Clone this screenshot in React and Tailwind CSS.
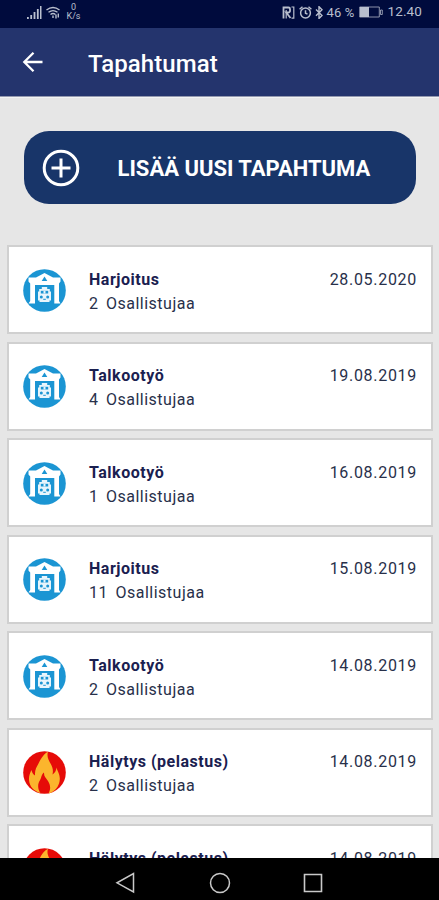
import React from 'react';

const EVENTS = [
  { id: 1, type: 'station', title: 'Harjoitus', count: 2, date: '28.05.2020' },
  { id: 2, type: 'station', title: 'Talkootyö', count: 4, date: '19.08.2019' },
  { id: 3, type: 'station', title: 'Talkootyö', count: 1, date: '16.08.2019' },
  { id: 4, type: 'station', title: 'Harjoitus', count: 11, date: '15.08.2019' },
  { id: 5, type: 'station', title: 'Talkootyö', count: 2, date: '14.08.2019' },
  { id: 6, type: 'fire', title: 'Hälytys (pelastus)', count: 2, date: '14.08.2019' },
  { id: 7, type: 'fire', title: 'Hälytys (pelastus)', count: 2, date: '14.08.2019' },
];

const StationIcon = () => (
  <svg viewBox="0 0 43 43" className="h-[43px] w-[43px] shrink-0">
    <circle cx="21.5" cy="21.5" r="21.3" fill="#1b95d3" />
    {/* Building with a gabled roof and two pillars */}
    <path d="M5.500 12.500V8.500H13l8.500-4.500L30 8.500h7.500v4l-1.500 2V32l1.500 2.500h-6.200V16H12v18.500H5.500L7.200 32V14.500z" fill="#fff" />
    <path d="M21.500 7.500l2.800 4.500h-5.600z" fill="#1b95d3" />
    {/* Vehicle in the doorway */}
    <path d="M18.800 18h5.400v2h2.600v2.500h1.200v9h-1.500V33h-10v-1.500H15v-9h1.200V20h2.600z" fill="#e8f5fc" />
    <path d="M17.800 21.800h7.400v2.700h-7.400z" fill="#1b95d3" />
    <path d="M20.500 21.800h2v2.700h-2z" fill="#e8f5fc" />
    <circle cx="18.300" cy="28" r="1.500" fill="#1b95d3" />
    <circle cx="24.700" cy="28" r="1.500" fill="#1b95d3" />
    <path d="M20.200 29.800h2.600v1h-2.600z" fill="#1b95d3" />
  </svg>
);

const FireIcon = () => (
  <svg viewBox="0 0 43 43" className="h-[43px] w-[43px] shrink-0">
    <circle cx="21.5" cy="21.5" r="21.3" fill="#e60b08" />
    <path
      d="M25 .8c-1.500 4.500.5 8.200 2.800 12.200 1.800 3.300 2.700 6.500 1.700 10.500 2.200-1.500 3.800-3.800 4-7 .5 3 3.500 6.500 3.300 11.500-.2 6-3.300 10.500-8.300 13.500-1 .5-2 .7-3 .9 2.500-4.400 2-8.400-.5-12.400-2-3-4.200-4.500-4-8.500-2.800 2-2.500 5.500-4.200 8-2.300 3.500-2.300 8.500.7 12.500C10.500 40 6.500 35.500 6 29c-.3-3.500 1-7 2.500-10 .5 2.500 1.500 4.500 3.500 5.500-.3-5.500 1.500-8.500 3.500-12C18 8 20 3.500 25 .8z"
      fill="#fbb52d"
    />
  </svg>
);

const StatusBar = () => (
  <div className="flex h-7 shrink-0 items-center justify-between bg-[#000b3d] pr-[17px] pl-[27px] text-[#b9bfce]">
    <div className="flex items-center gap-1 pb-1">
      <svg viewBox="0 0 15 13" className="h-[13px] w-[15px]" fill="currentColor">
        <path d="M0 11h1.800v2H0zM3.300 9h1.800v4H3.300zM6.600 6h1.800v7H6.600zM9.900 3h1.800v10H9.900zM13 0h1.500v13H13z" />
      </svg>
      <svg viewBox="0 0 14 12" className="h-[13px] w-[14px]" fill="none" stroke="currentColor" strokeWidth="1.400">
        <path d="M.5 3.500Q7-1.500 13.500 3.500M2.500 5.800Q7 2.500 11.500 5.800M4.500 8Q7 6 9.500 8" />
        <path d="M7 9v2.500M10 8v4M12.300 7v4" />
      </svg>
      <div className="ml-[2px] flex w-[15px] flex-col items-center text-[9px] leading-[9px]">
        <span>0</span>
        <span>K/s</span>
      </div>
    </div>
    <div className="flex items-center pb-[4px]">
      <svg viewBox="0 0 13 13" className="mr-1 h-[13px] w-[13px]" fill="none" stroke="currentColor">
        <path d="M1.500 12.500V1.500h5q1.500 0 1.500 1.500v2q0 1.500-2 1.500H4.200l4.300 5.500" strokeWidth="1.800" />
        <path d="M4.200 12.500V4M9.500 1h2.300v11.200H9.500" strokeWidth="1.200" />
      </svg>
      <svg viewBox="0 0 13 13" className="mr-[3px] h-[13px] w-[13px]" fill="none" stroke="currentColor" strokeWidth="1.500">
        <circle cx="6.500" cy="7" r="4.900" />
        <path d="M.6 3.200L3.500.7M12.400 3.200L9.500.7M6.500 4.300V7.200l2 1" />
      </svg>
      <svg viewBox="0 0 9 13" className="mr-[2px] h-[13px] w-[9px]" fill="none" stroke="currentColor" strokeWidth="1.400">
        <path d="M1 3.500l6 6-3 3V.7l3 3-6 6" />
      </svg>
      <span className="text-[13px] leading-none tracking-[0.200px] whitespace-nowrap">46 %</span>
      <svg viewBox="0 0 24 12" className="mr-[5px] ml-1 h-3 w-6">
        <path d="M.7 1h19.600v10H.7zM21.500 4h1.800v4.500h-1.800z" fill="none" stroke="currentColor" strokeOpacity=".75" />
        <path d="M1 1h9v10H1z" fill="currentColor" />
      </svg>
      <span className="text-[13.500px] leading-none tracking-[0.100px]">12.40</span>
    </div>
  </div>
);

const EventCard = ({ event }) => (
  <div className="flex h-[89px] shrink-0 border-2 border-[#d0d0d0] bg-white pr-[14px] pl-[14px] text-[#28304a]">
    <div className="pt-[21.500px]">
      {event.type === 'fire' ? <FireIcon /> : <StationIcon />}
    </div>
    <div className="flex flex-1 flex-col pt-[20.500px] pl-[23px] leading-6">
      <span className="text-[16px] font-bold tracking-[0.520px] text-[#1a2050]">{event.title}</span>
      <span className="text-[16px] tracking-[0.500px] [word-spacing:3px]">{event.count} Osallistujaa</span>
    </div>
    <span className="pt-[20.500px] text-[16px] leading-6 tracking-[0.700px]">{event.date}</span>
  </div>
);

const NavBar = () => (
  <nav className="flex h-[42px] shrink-0 items-center bg-black pt-[7px] pl-[115px] text-[#c9c9c9]">
    <svg viewBox="0 0 20 22" className="h-[22px] w-5" fill="none" stroke="currentColor" strokeWidth="1.500">
      <path d="M18.500 1.500v18.500L2 10.800z" />
    </svg>
    <svg viewBox="0 0 22 22" className="ml-[74px] h-[22px] w-[22px]" fill="none" stroke="currentColor" strokeWidth="1.500">
      <circle cx="11" cy="11" r="9.500" />
    </svg>
    <svg viewBox="0 0 20 20" className="ml-[72px] h-5 w-5" fill="none" stroke="currentColor" strokeWidth="1.600">
      <path d="M1.500 1.500h17v17h-17z" />
    </svg>
  </nav>
);

export default function App() {
  return (
    <div className="flex h-[900px] w-[439px] flex-col overflow-hidden bg-[#e6e6e6] font-['Roboto',sans-serif]">
      <StatusBar />
      <header className="flex h-[69px] shrink-0 items-center border-b border-[#9499af] bg-[#24346d] pl-[22px] text-white">
        <svg viewBox="0 0 22 22" className="h-[22px] w-[22px]" fill="none" stroke="currentColor" strokeWidth="2.300">
          <path d="M20.500 11H2.500M11.500 1.800L2.300 11l9.200 9.200" />
        </svg>
        <h1 className="pt-[3px] pl-[44px] text-[24px] leading-8 font-medium tracking-[0.100px]">Tapahtumat</h1>
      </header>

      <main className="flex min-h-0 flex-1 flex-col overflow-hidden border-t border-[#f3f3f3] pt-[33px]">
        <button className="mr-[23px] ml-6 flex h-[73px] shrink-0 items-center rounded-[25px] bg-[#183569] pl-[18px] text-white">
          <svg viewBox="0 0 38 38" className="h-[38px] w-[38px]" fill="none" stroke="currentColor" strokeWidth="3">
            <circle cx="19" cy="19" r="16.800" />
            <path d="M19 9.500v19M9.500 19h19" />
          </svg>
          <span className="pt-[2px] pl-[37.500px] text-[22px] font-bold whitespace-nowrap">LISÄÄ UUSI TAPAHTUMA</span>
        </button>

        <div className="mt-[41.300px] mr-[6px] ml-[7px] flex flex-col gap-[7.500px]">
          {EVENTS.map(event => (
            <EventCard key={event.id} event={event} />
          ))}
        </div>
      </main>

      <NavBar />
    </div>
  );
}
